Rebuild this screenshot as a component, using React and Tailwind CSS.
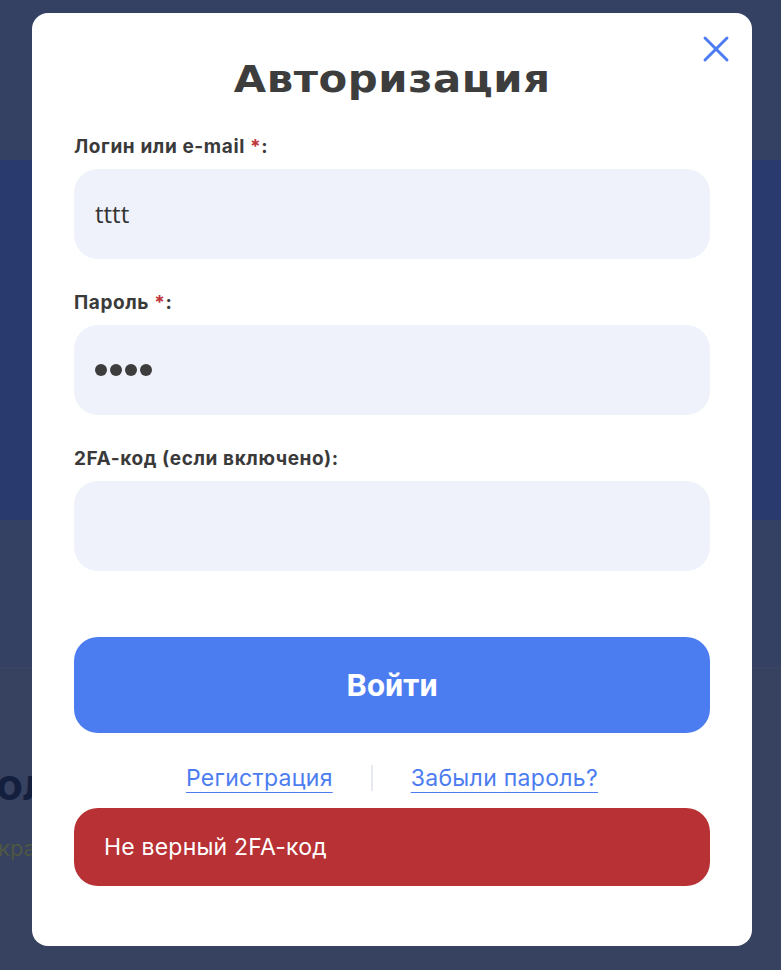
import { X } from "lucide-react"

// Окно авторизации поверх затемнённой страницы
const Field = ({ label, required, value, type = "text" }) => (
  <div className="flex flex-col">
    <label className="mb-[12px] font-['Inter',sans-serif] text-[19px] leading-[21px] font-bold tracking-[0.6px] text-[#3a3a3a]">
      {label}
      {required && <span className="text-[#c0353a]"> *</span>}:
    </label>
    <div className="flex h-[90px] items-center rounded-[24px] bg-[#eff2fb] px-[21px]">
      {type === "password" ? (
        <span className="flex gap-[3px]">
          {Array.from({ length: value.length }).map((_, i) => (
            <span key={i} className="block h-[12px] w-[12px] rounded-full bg-[#3d3d3d]" />
          ))}
        </span>
      ) : (
        <span className="font-['Open_Sans',sans-serif] text-[24px] text-[#333]">{value}</span>
      )}
    </div>
  </div>
)

export default function App() {
  return (
    <div className="relative h-[970px] w-full overflow-hidden font-['Inter',sans-serif]">
      {/* страница под затемнением */}
      <div className="h-[160px] bg-[#354163]" />
      <div className="h-[360px] bg-[#293b6e]" />
      <div className="h-[148px] border-b border-[#3a4663] bg-[#354163]" />
      <div className="h-[302px] bg-[#36425f] pt-[92px]">
        <div className="-ml-[4px] text-[44px] leading-[48px] font-bold text-[#141f3d]">ол</div>
        <div className="mt-[24px] -ml-[2px] text-[22px] text-[#4d5744]">кра</div>
      </div>

      {/* модальное окно */}
      <div className="absolute left-[32px] top-[13px] w-[720px] rounded-[16px] bg-white px-[42px] pt-[49px] pb-[60px]">
        <button className="absolute right-[14px] top-[14px] text-[#4c7df0]">
          <X size={44} strokeWidth={1.6} />
        </button>
        <h2 className="text-center text-[#3d3d3d]">
          <span className="inline-block scale-x-[1.13] font-['DejaVu_Sans',sans-serif] text-[37px] leading-[36px] font-bold tracking-[0.5px]">
            Авторизация
          </span>
        </h2>

        <div className="mt-[38px] flex flex-col gap-[33px]">
          <Field label="Логин или e-mail" required value="tttt" />
          <Field label="Пароль" required value="tttt" type="password" />
          <Field label="2FA-код (если включено)" value="" />
        </div>

        <button className="mt-[66px] flex h-[96px] w-full items-center justify-center rounded-[24px] bg-[#4c7df0] font-['Roboto',sans-serif] text-[32px] font-bold text-white">
          Войти
        </button>

        <div className="mt-[31px] flex h-[28px] items-center justify-center gap-[38px] text-[23px] tracking-[0.3px] text-[#4c7df0]">
          <a className="underline decoration-1 underline-offset-[6px]">Регистрация</a>
          <span className="h-[26px] w-[2px] bg-[#e6e9f0]" />
          <a className="underline decoration-1 underline-offset-[6px]">Забыли пароль?</a>
        </div>

        <div className="mt-[16px] flex h-[78px] items-center rounded-[24px] bg-[#b83134] px-[30px] text-[23px] tracking-[0.2px] text-white">
          Не верный 2FA-код
        </div>
      </div>
    </div>
  )
}
